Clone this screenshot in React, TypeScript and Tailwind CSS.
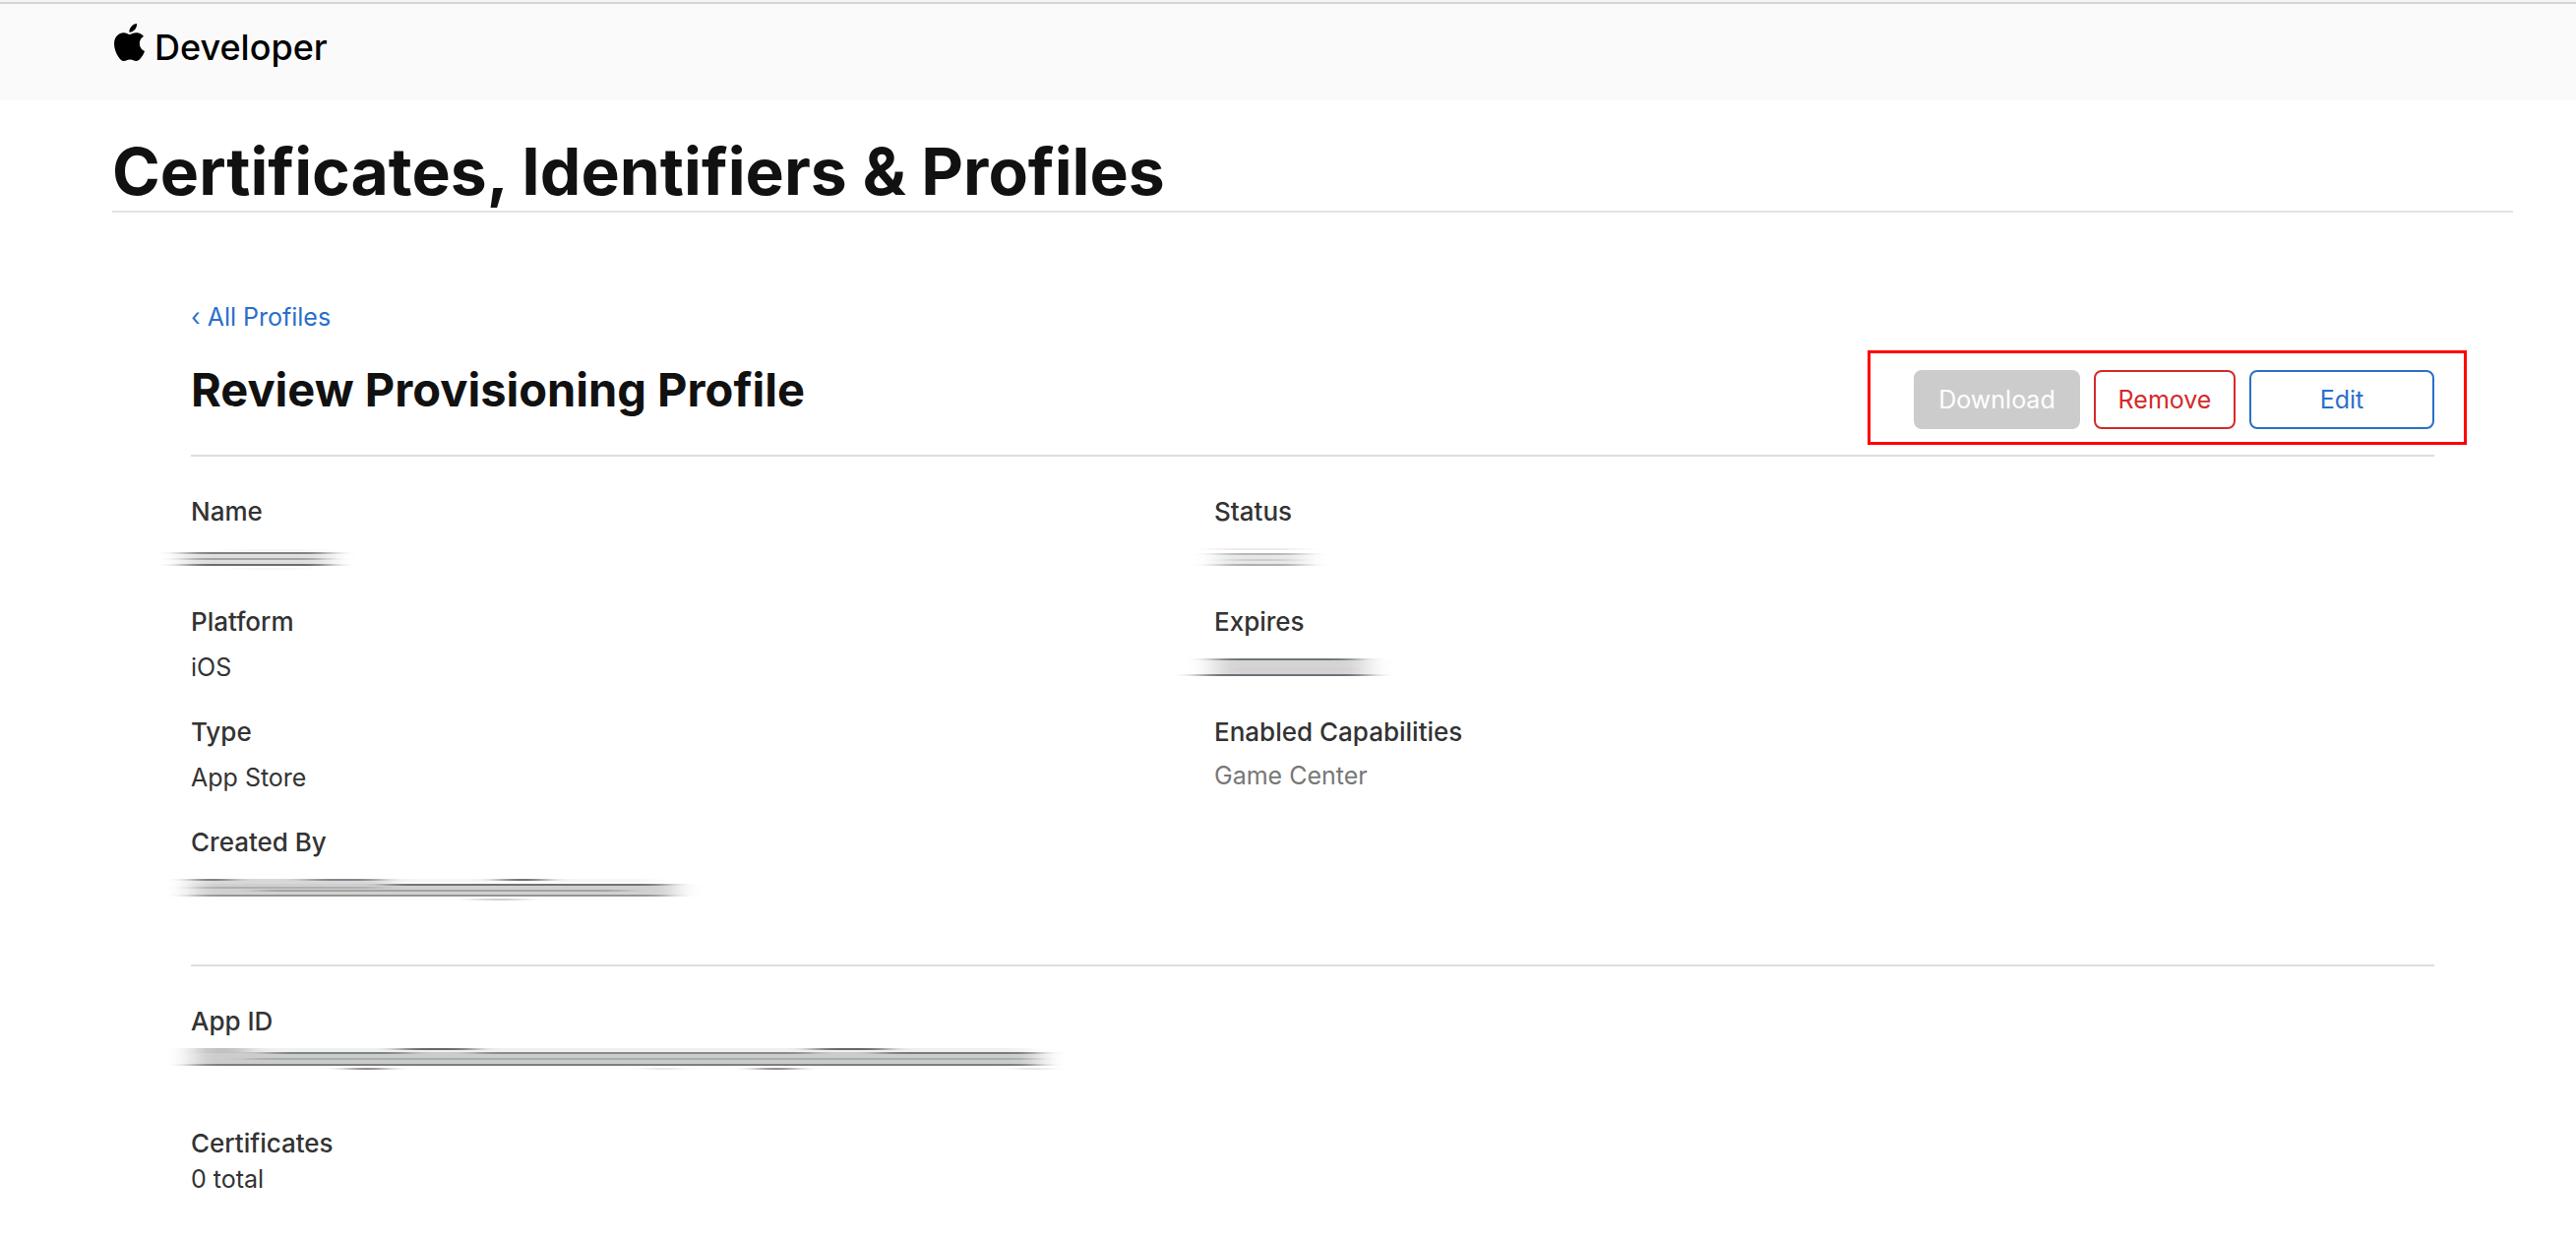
import clsx from 'clsx';
import type { PropsWithChildren } from 'react';

type Stroke = {
    x: number;
    y: number;
    width: number;
    height: number;
    color: string;
};

type SmearProps = {
    id: string;
    label: string;
    width: number;
    strokes: Stroke[];
};

/** Horizontally smudged strokes that hide a private value. */
function Smear({ id, label, width, strokes }: SmearProps) {
    return (
        <svg
            role="img"
            aria-label={label}
            width={width}
            height={28}
            viewBox={`0 0 ${width} 28`}
            className="block overflow-visible"
        >
            <defs>
                <filter
                    id={id}
                    filterUnits="userSpaceOnUse"
                    colorInterpolationFilters="sRGB"
                    x={-70}
                    y={-6}
                    width={width + 140}
                    height={40}
                >
                    <feGaussianBlur stdDeviation="13 0.6" />
                </filter>
            </defs>
            <g filter={`url(#${id})`}>
                {strokes.map((stroke, index) => (
                    <rect
                        key={index}
                        x={stroke.x}
                        y={stroke.y}
                        width={stroke.width}
                        height={stroke.height}
                        fill={stroke.color}
                    />
                ))}
            </g>
        </svg>
    );
}

const nameStrokes: Stroke[] = [
    { x: 40, y: 2, width: 90, height: 2, color: '#fbf6f6' },
    { x: -6, y: 5, width: 146, height: 14, color: '#dedede' },
    { x: -6, y: 5, width: 146, height: 2, color: '#828282' },
    { x: -6, y: 11, width: 142, height: 2, color: '#a4a4a8' },
    { x: -6, y: 17, width: 146, height: 2, color: '#6c6c6c' },
    { x: 50, y: 21, width: 60, height: 2, color: '#f5f5fa' },
];

const statusStrokes: Stroke[] = [
    { x: 0, y: 1, width: 86, height: 2, color: '#eeeaea' },
    { x: 4, y: 6, width: 86, height: 13, color: '#e4e8e8' },
    { x: 4, y: 6, width: 86, height: 2, color: '#bcb8b8' },
    { x: 16, y: 12, width: 64, height: 2, color: '#d2cccf' },
    { x: 4, y: 17, width: 86, height: 2, color: '#b0adae' },
];

const expiresStrokes: Stroke[] = [
    { x: 0, y: 1, width: 154, height: 17, color: '#d4d4d4' },
    { x: 0, y: 1, width: 142, height: 2, color: '#6f7472' },
    { x: 20, y: 11, width: 130, height: 2, color: '#d8ccd2' },
    { x: -14, y: 17, width: 170, height: 2, color: '#6d7078' },
];

const createdByStrokes: Stroke[] = [
    { x: 2, y: 1, width: 200, height: 6, color: '#d8d8d8' },
    { x: 200, y: 1, width: 270, height: 3, color: '#f5f7f7' },
    { x: 2, y: 6, width: 490, height: 13, color: '#d0d0d0' },
    { x: 4, y: 1, width: 34, height: 2, color: '#6c6c6c' },
    { x: 120, y: 1, width: 70, height: 2, color: '#80868a' },
    { x: 316, y: 1, width: 42, height: 2, color: '#62686c' },
    { x: 200, y: 6, width: 280, height: 2, color: '#727272' },
    { x: 2, y: 9, width: 190, height: 2, color: '#b2aeb2' },
    { x: 70, y: 12, width: 370, height: 2, color: '#a0a4a2' },
    { x: 2, y: 17, width: 480, height: 2, color: '#959590' },
    { x: 290, y: 21, width: 46, height: 2, color: '#d0cccf' },
];

const appIdStrokes: Stroke[] = [
    { x: 2, y: 1, width: 850, height: 6, color: '#eef1ef' },
    { x: 2, y: 5, width: 860, height: 14, color: '#cbcccc' },
    { x: 4, y: 1, width: 54, height: 5, color: '#c4bfc0' },
    { x: 214, y: 1, width: 72, height: 2, color: '#6c6468' },
    { x: 634, y: 1, width: 72, height: 2, color: '#6c6468' },
    { x: 80, y: 5, width: 140, height: 2, color: '#808482' },
    { x: 290, y: 5, width: 340, height: 2, color: '#8a8a8a' },
    { x: 700, y: 5, width: 160, height: 2, color: '#7a7c7a' },
    { x: 60, y: 11, width: 800, height: 2, color: '#aaaeac' },
    { x: 2, y: 17, width: 858, height: 2, color: '#7e7e7e' },
    { x: 162, y: 21, width: 34, height: 2, color: '#7c7880' },
    { x: 470, y: 21, width: 20, height: 2, color: '#d8d8d8' },
    { x: 578, y: 21, width: 34, height: 2, color: '#7c7880' },
    { x: 846, y: 21, width: 18, height: 2, color: '#d0d0d0' },
];

function AppleLogo() {
    return (
        <svg
            aria-hidden="true"
            viewBox="0 0 814 1000"
            className="h-[38px] w-[31px]"
            fill="currentColor"
        >
            <path d="M788.1 340.9c-5.8 4.5-108.2 62.2-108.2 190.5 0 148.4 130.3 200.9 134.2 202.2-.6 3.2-20.7 71.9-68.7 141.9-42.8 61.6-87.5 123.1-155.5 123.1s-85.5-39.5-164-39.5c-76.5 0-103.7 40.8-165.9 40.8s-105.6-57-155.5-127C46.7 790.7 0 663 0 541.8c0-194.4 126.4-297.5 250.8-297.5 66.1 0 121.2 43.4 162.7 43.4 39.5 0 101.1-46 176.3-46 28.5 0 130.9 2.6 198.3 99.2zm-234-181.5c31.1-36.9 53.1-88.1 53.1-139.3 0-7.1-.6-14.3-1.9-20.1-50.6 1.9-110.8 33.7-147.1 75.8-28.5 32.4-55.1 83.6-55.1 135.5 0 7.8 1.3 15.6 1.9 18.1 3.2.6 8.4 1.3 13.6 1.3 45.4 0 102.5-30.4 135.5-71.3z" />
        </svg>
    );
}

type FieldProps = PropsWithChildren<{ label: string }>;

function Field({ label, children }: FieldProps) {
    return (
        <div className="h-28">
            <dt className="text-[26px] leading-9 font-medium">{label}</dt>
            <dd className="pt-[10px]">{children}</dd>
        </div>
    );
}

type ActionButtonProps = PropsWithChildren<{
    className: string;
    disabled?: boolean;
}>;

function ActionButton({ className, disabled, children }: ActionButtonProps) {
    return (
        <button
            type="button"
            disabled={disabled}
            className={clsx('h-[60px] rounded-lg border-2 pb-px', className)}
        >
            {children}
        </button>
    );
}

export default function App() {
    return (
        <div className="min-h-screen border-t-2 border-[#f8f3f6] bg-white font-[Inter,sans-serif] text-[25px] leading-9 text-[#333]">
            <header className="h-[100px] border-t-2 border-[#d6d3d5] bg-[#fafafa] pt-5 pl-[116px] text-black">
                <a href="#" className="inline-flex items-start gap-[10px]">
                    <AppleLogo />
                    <span className="text-[36px] leading-[48px] font-medium">
                        Developer
                    </span>
                </a>
            </header>

            <main className="pr-16 pl-[114px]">
                <h1 className="border-b-2 border-[#e3e3e3] pt-8 text-[66px] leading-[80px] font-bold text-[#111]">
                    Certificates, Identifiers &amp; Profiles
                </h1>

                <div className="px-20 pt-[88px]">
                    <a href="#" className="text-[#2a6fc9]">
                        ‹ All Profiles
                    </a>

                    <div className="mt-4 flex items-start justify-between">
                        <h2 className="pt-3 text-[47px] leading-[56px] font-bold text-[#111]">
                            Review Provisioning Profile
                        </h2>
                        <div className="-mr-[33px] flex gap-[14px] border-[3px] border-[#ff0000] pt-[17px] pr-[30px] pb-[13px] pl-11">
                            <ActionButton
                                disabled
                                className="w-[169px] border-[#ccc] bg-[#ccc] text-white"
                            >
                                Download
                            </ActionButton>
                            <ActionButton className="w-36 border-[#d32a2a] text-[#d32a2a]">
                                Remove
                            </ActionButton>
                            <ActionButton className="w-[188px] border-[#2a6fc9] text-[#2a6fc9]">
                                Edit
                            </ActionButton>
                        </div>
                    </div>

                    <div className="mt-[10px] grid grid-cols-[1040px_1fr] border-y-2 border-[#dedede] pt-[38px] pb-[30px]">
                        <dl>
                            <Field label="Name">
                                <div className="pt-2">
                                    <Smear
                                        id="smear-name"
                                        label="Hidden name"
                                        width={136}
                                        strokes={nameStrokes}
                                    />
                                </div>
                            </Field>
                            <Field label="Platform">iOS</Field>
                            <Field label="Type">App Store</Field>
                            <Field label="Created By">
                                <div className="pt-2">
                                    <Smear
                                        id="smear-created"
                                        label="Hidden creator"
                                        width={500}
                                        strokes={createdByStrokes}
                                    />
                                </div>
                            </Field>
                        </dl>
                        <dl>
                            <Field label="Status">
                                <div className="pt-2">
                                    <Smear
                                        id="smear-status"
                                        label="Hidden status"
                                        width={90}
                                        strokes={statusStrokes}
                                    />
                                </div>
                            </Field>
                            <Field label="Expires">
                                <div className="pt-2">
                                    <Smear
                                        id="smear-expires"
                                        label="Hidden date"
                                        width={150}
                                        strokes={expiresStrokes}
                                    />
                                </div>
                            </Field>
                            <Field label="Enabled Capabilities">
                                <p className="leading-8 text-[#777]">
                                    Game Center
                                </p>
                            </Field>
                        </dl>
                    </div>

                    <dl className="pt-[38px]">
                        <dt className="text-[26px] leading-9 font-medium">
                            App ID
                        </dt>
                        <dd className="h-[88px] pt-2">
                            <Smear
                                id="smear-app"
                                label="Hidden app ID"
                                width={866}
                                strokes={appIdStrokes}
                            />
                        </dd>
                        <dt className="text-[26px] leading-9 font-medium">
                            Certificates
                        </dt>
                        <dd>0 total</dd>
                    </dl>
                </div>
            </main>
        </div>
    );
}
